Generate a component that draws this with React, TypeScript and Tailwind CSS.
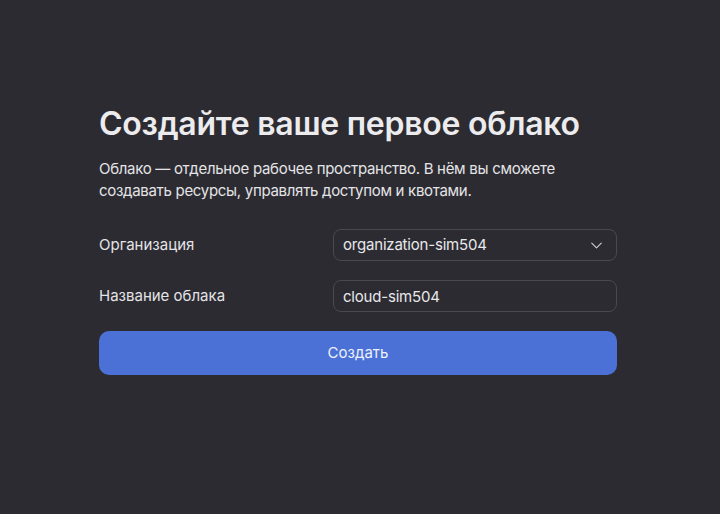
import {ChevronDown} from 'lucide-react';

const Field = ({label, children}: {label: string; children: React.ReactNode}) => (
  <div className="flex items-center">
    <div className="w-[234px] text-[15px] text-[#e4e4e6]">{label}</div>
    <div className="flex-1">{children}</div>
  </div>
);

const App = () => {
  return (
    <div className="min-h-screen w-full bg-[#2c2b32] pt-[104px] font-['Inter',sans-serif] text-[#e8e8ea]">
      <div className="ml-[99px] w-[518px]">
        <h1 className="text-[32px] font-semibold leading-[40px] tracking-[-0.25px] text-[#ececee]">
          Создайте ваше первое облако
        </h1>
        <p className="mt-[14px] text-[15px] leading-[22px] tracking-[-0.3px] text-[#e4e4e6]">
          Облако — отдельное рабочее пространство. В нём вы сможете
          <br />
          создавать ресурсы, управлять доступом и квотами.
        </p>
        <div className="mt-[27px] flex flex-col gap-[19px]">
          <Field label="Организация">
            <button className="flex h-[32px] w-full items-center justify-between rounded-[8px] border border-[#4a4950] pl-[9px] pr-[10px] text-[15px] tracking-[-0.2px] text-[#e8e8ea]">
              <span>organization-sim504</span>
              <ChevronDown size={19} strokeWidth={1.4} className="text-[#cfcfd2]" />
            </button>
          </Field>
          <Field label="Название облака">
            <input
              defaultValue="cloud-sim504"
              className="h-[32px] w-full rounded-[8px] border border-[#4a4950] bg-transparent px-[9px] text-[15px] tracking-[-0.2px] text-[#e8e8ea] outline-none"
            />
          </Field>
        </div>
        <button className="mt-[19px] h-[44px] w-full rounded-[10px] bg-[#4b71d6] text-[15px] text-[#eef1fb]">
          Создать
        </button>
      </div>
    </div>
  );
};

export default App;
